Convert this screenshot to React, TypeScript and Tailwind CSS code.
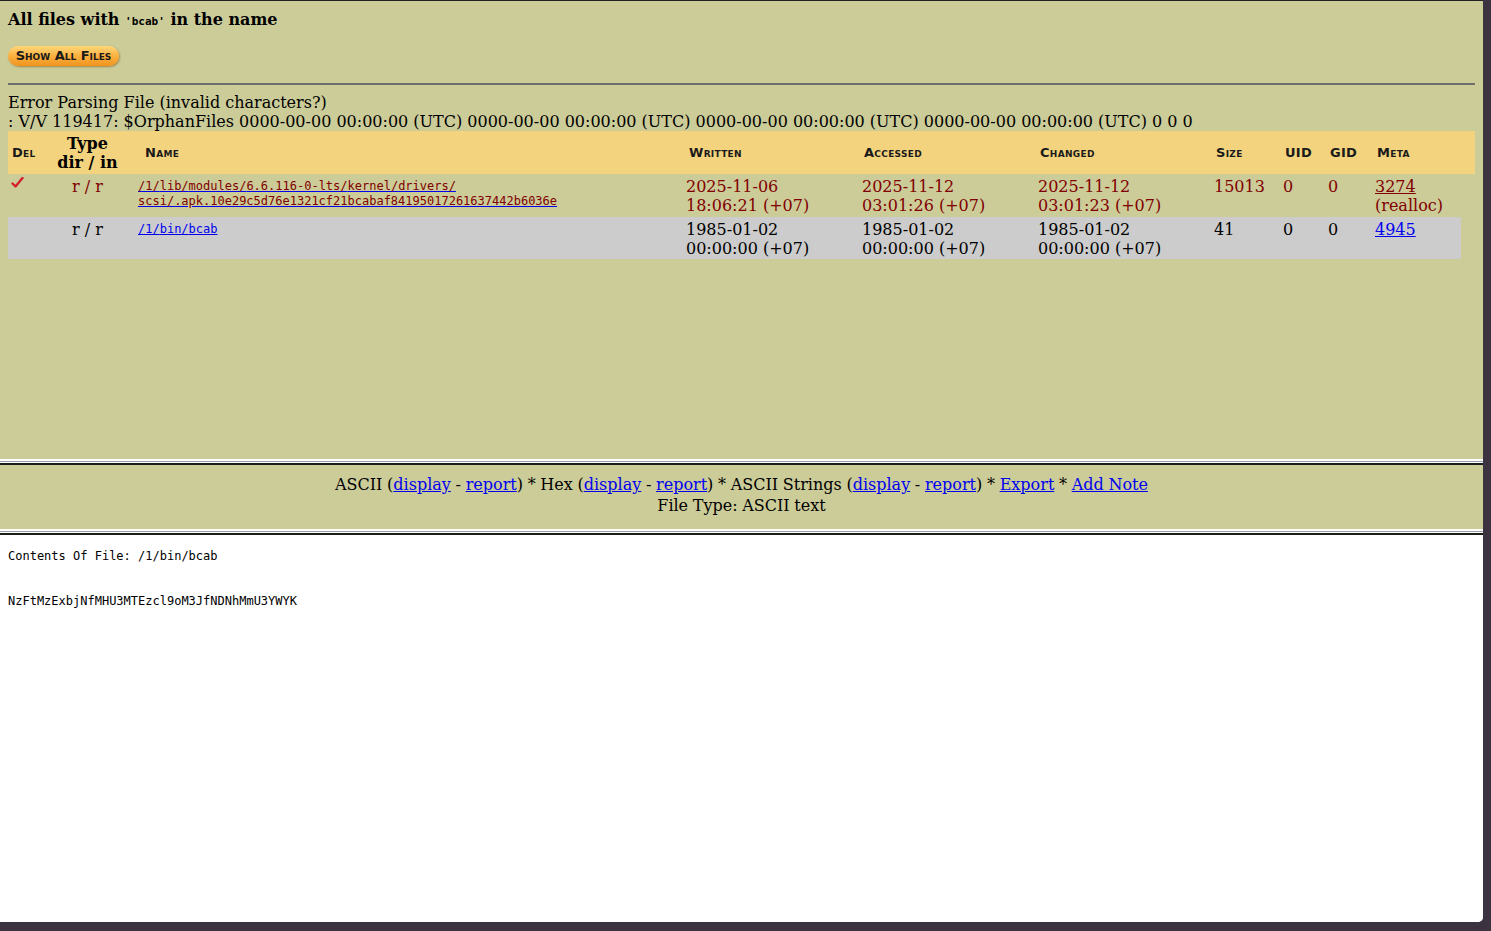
import React from "react";

const serif = "font-['DejaVu_Serif',serif]";
const mono = "font-['DejaVu_Sans_Mono',monospace]";
const caps = "font-['DejaVu_Sans',sans-serif] font-bold [font-variant:small-caps] text-[13px] tracking-[0.3px] text-[#1a1a1a]";
const link = "text-[#0000ee] underline";

function FrameBorder() {
  return (
    <div className="flex flex-col">
      <div className="h-[2px] bg-white" />
      <div className="h-px bg-[#9d9daa]" />
      <div className="h-px bg-white" />
      <div className="h-[2px] bg-[#1c1c1c]" />
    </div>
  );
}

function Check() {
  return (
    <svg width="13" height="11" viewBox="0 0 13 11">
      <path d="M1.5 6.5 L4.5 9.5 L11.5 1" fill="none" stroke="#d3202c" strokeWidth="2.4" strokeLinecap="round" strokeLinejoin="round" />
    </svg>
  );
}

function PathLink({ parts, red }: { parts: string[]; red?: boolean }) {
  return (
    <>
      {parts.map((p, i) => (
        <a key={i} href="#" className={link}>
          <span className={red ? "text-[#800000]" : ""}>{p}</span>
        </a>
      ))}
    </>
  );
}

export default function App() {
  return (
    <div className={`h-[931px] w-[1491px] overflow-hidden bg-[#3b3340] ${serif} text-[16px] text-black`}>
      <div className="flex h-[922px] w-[1483px] flex-col overflow-hidden rounded-br-[5px] bg-white">
        {/* top frame */}
        <div className="h-[459px] border-t border-[#222] bg-[#cccc99] px-2 pt-[9px]">
          <h3 className="text-[16px] font-bold leading-[20px]">
            All files with <span className={`${mono} text-[11px] font-bold`}>'bcab'</span> in the name
          </h3>
          <button className="mt-[14px] flex h-[20px] w-[111px] items-center justify-center rounded-full bg-linear-to-b from-[#ffd878] via-[#fbb03e] to-[#f0941c] shadow-[1px_1px_2px_rgba(120,70,0,0.5)]">
            <span className={`${caps} text-[12px] tracking-[0px]`}>Show All Files</span>
          </button>
          <div className="mt-[17px] border-t-2 border-[#6e6e6e]" />
          <div className="mt-[8px] leading-[19px]">
            <p>Error Parsing File (invalid characters?)</p>
            <p>: V/V 119417: $OrphanFiles 0000-00-00 00:00:00 (UTC) 0000-00-00 00:00:00 (UTC) 0000-00-00 00:00:00 (UTC) 0000-00-00 00:00:00 (UTC) 0 0 0</p>
          </div>
          <table className="w-[1467px] table-fixed border-collapse leading-[19px]">
            <colgroup>
              <col className="w-[40px]" />
              <col className="w-[79px]" />
              <col className="w-[557px]" />
              <col className="w-[176px]" />
              <col className="w-[176px]" />
              <col className="w-[176px]" />
              <col className="w-[69px]" />
              <col className="w-[45px]" />
              <col className="w-[47px]" />
              <col className="w-[88px]" />
              <col className="w-[14px]" />
            </colgroup>
            <thead>
              <tr className="h-[43px] bg-[#f3d37d] text-left align-middle">
                <th className={`pl-[4px] ${caps}`}>Del</th>
                <th className="text-center font-bold leading-[19px]">Type<br />dir / in</th>
                <th className={`pl-[18px] ${caps}`}>Name</th>
                <th className={`pl-[5px] ${caps}`}>Written</th>
                <th className={`pl-[4px] ${caps}`}>Accessed</th>
                <th className={`pl-[4px] ${caps}`}>Changed</th>
                <th className={`pl-[4px] ${caps}`}>Size</th>
                <th className={`pl-[4px] ${caps}`}>UID</th>
                <th className={`pl-[4px] ${caps}`}>GID</th>
                <th className={`pl-[4px] ${caps}`}>Meta</th>
                <th />
              </tr>
            </thead>
            <tbody>
              <tr className="h-[43px] align-top text-[#800000]">
                <td className="pl-[3px] pt-[3px]"><Check /></td>
                <td className="pt-[3px] text-center">r / r</td>
                <td className={`${mono} pl-[11px] pt-[5px] text-[12px] leading-[15px]`}>
                  <PathLink red parts={["/1/", "lib/", "modules/", "6.6.116-0-lts/", "kernel/", "drivers/"]} />
                  <br />
                  <PathLink red parts={["scsi/", ".apk.10e29c5d76e1321cf21bcabaf84195017261637442b6036e"]} />
                </td>
                <td className="pl-[2px] pt-[3px]">2025-11-06<br />18:06:21 (+07)</td>
                <td className="pl-[2px] pt-[3px]">2025-11-12<br />03:01:26 (+07)</td>
                <td className="pl-[2px] pt-[3px]">2025-11-12<br />03:01:23 (+07)</td>
                <td className="pl-[2px] pt-[3px]">15013</td>
                <td className="pl-[2px] pt-[3px]">0</td>
                <td className="pl-[2px] pt-[3px]">0</td>
                <td className="pl-[2px] pt-[3px]">
                  <a href="#" className="underline">3274</a>
                  <br />(realloc)
                </td>
                <td />
              </tr>
              <tr className="h-[42px] align-top">
                <td className="bg-[#cccccc]" />
                <td className="bg-[#cccccc] pt-[3px] text-center">r / r</td>
                <td className={`${mono} bg-[#cccccc] pl-[11px] pt-[5px] text-[12px] leading-[15px]`}>
                  <PathLink parts={["/1/", "bin/", "bcab"]} />
                </td>
                <td className="bg-[#cccccc] pl-[2px] pt-[3px]">1985-01-02<br />00:00:00 (+07)</td>
                <td className="bg-[#cccccc] pl-[2px] pt-[3px]">1985-01-02<br />00:00:00 (+07)</td>
                <td className="bg-[#cccccc] pl-[2px] pt-[3px]">1985-01-02<br />00:00:00 (+07)</td>
                <td className="bg-[#cccccc] pl-[2px] pt-[3px]">41</td>
                <td className="bg-[#cccccc] pl-[2px] pt-[3px]">0</td>
                <td className="bg-[#cccccc] pl-[2px] pt-[3px]">0</td>
                <td className="bg-[#cccccc] pl-[2px] pt-[3px]">
                  <a href="#" className={link}>4945</a>
                </td>
                <td />
              </tr>
            </tbody>
          </table>
        </div>

        <FrameBorder />

        {/* middle frame */}
        <div className="h-[64px] bg-[#cccc99] pt-[9px] text-center leading-[21px] [word-spacing:-0.4px]">
          <p>
            ASCII (<a href="#" className={link}>display</a> - <a href="#" className={link}>report</a>) * Hex (<a href="#" className={link}>display</a> - <a href="#" className={link}>report</a>) * ASCII Strings (<a href="#" className={link}>display</a> - <a href="#" className={link}>report</a>) * <a href="#" className={link}>Export</a> * <a href="#" className={link}>Add Note</a>
          </p>
          <p>File Type: ASCII text</p>
        </div>

        <FrameBorder />

        {/* bottom frame */}
        <div className={`flex-1 bg-white px-2 pt-[14px] ${mono} text-[12px] leading-[15px]`}>
          <p>Contents Of File: /1/bin/bcab</p>
          <pre className={`${mono} mt-[30px] text-[12px] leading-[15px]`}>NzFtMzExbjNfMHU3MTEzcl9oM3JfNDNhMmU3YWYK</pre>
        </div>
      </div>
    </div>
  );
}
